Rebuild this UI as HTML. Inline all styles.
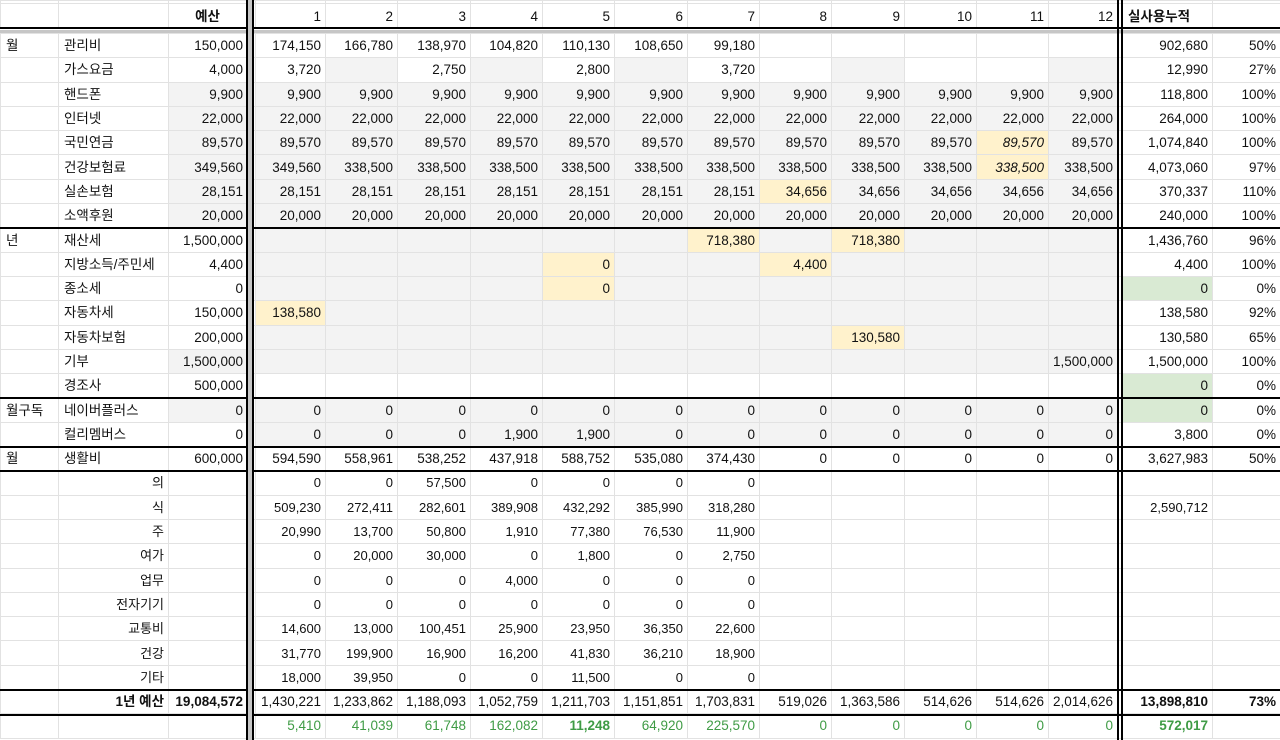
<!DOCTYPE html>
<html><head><meta charset="utf-8">
<style>
html,body{margin:0;padding:0;background:#fff;width:1280px;height:740px;overflow:hidden;position:relative}
table{border-collapse:collapse;table-layout:fixed;position:absolute;left:0;top:0;width:1280px;font-family:"Liberation Sans","Noto Sans CJK KR",sans-serif;font-size:13.5px;color:#111}
td{border:1px solid #e2e2e2;padding:1px 4px 0 3px;text-align:right;white-space:nowrap;overflow:hidden;line-height:14px}
tr.r td{height:22.3px}
td.l{text-align:left;padding-left:5px}
td.c{text-align:center}
.g{background:#f3f3f3}
.y{background:#fff2cc}
.gr{background:#d9ead3}
.i{font-style:italic}
.b{font-weight:bold}
tr.s td{font-size:13px}
tr.t td{color:#3f9b45}
.h{position:absolute;background:#000}
</style></head><body>
<table>
<colgroup><col style="width:58px"><col style="width:110px"><col style="width:79px"><col style="width:8px"><col style="width:70px"><col style="width:72px"><col style="width:73px"><col style="width:72px"><col style="width:72px"><col style="width:73px"><col style="width:72px"><col style="width:72px"><col style="width:73px"><col style="width:72px"><col style="width:72px"><col style="width:69px"><col style="width:5px"><col style="width:90px"><col style="width:68px"></colgroup>
<tr style="height:3px"><td style="height:2px;padding:0"></td><td style="padding:0"></td><td style="padding:0"></td><td style="padding:0"></td><td style="padding:0"></td><td style="padding:0"></td><td style="padding:0"></td><td style="padding:0"></td><td style="padding:0"></td><td style="padding:0"></td><td style="padding:0"></td><td style="padding:0"></td><td style="padding:0"></td><td style="padding:0"></td><td style="padding:0"></td><td style="padding:0"></td><td style="padding:0"></td><td style="padding:0"></td><td style="padding:0"></td></tr>
<tr><td style="height:23px"></td><td></td><td class="c b">예산</td><td></td><td>1</td><td>2</td><td>3</td><td>4</td><td>5</td><td>6</td><td>7</td><td>8</td><td>9</td><td>10</td><td>11</td><td>12</td><td></td><td class="l b">실사용누적</td><td></td></tr>
<tr><td style="height:4px;padding:0;border:0" colspan="19"></td></tr>
<tr class="r"><td class="l">월</td><td class="l">관리비</td><td>150,000</td><td></td><td>174,150</td><td>166,780</td><td>138,970</td><td>104,820</td><td>110,130</td><td>108,650</td><td>99,180</td><td></td><td></td><td></td><td></td><td></td><td></td><td>902,680</td><td>50%</td></tr>
<tr class="r"><td></td><td class="l">가스요금</td><td>4,000</td><td></td><td>3,720</td><td class="g"></td><td>2,750</td><td class="g"></td><td>2,800</td><td class="g"></td><td>3,720</td><td></td><td class="g"></td><td></td><td></td><td class="g"></td><td></td><td>12,990</td><td>27%</td></tr>
<tr class="r"><td></td><td class="l">핸드폰</td><td class="g">9,900</td><td></td><td class="g">9,900</td><td class="g">9,900</td><td class="g">9,900</td><td class="g">9,900</td><td class="g">9,900</td><td class="g">9,900</td><td class="g">9,900</td><td class="g">9,900</td><td class="g">9,900</td><td class="g">9,900</td><td class="g">9,900</td><td class="g">9,900</td><td></td><td>118,800</td><td>100%</td></tr>
<tr class="r"><td></td><td class="l">인터넷</td><td class="g">22,000</td><td></td><td class="g">22,000</td><td class="g">22,000</td><td class="g">22,000</td><td class="g">22,000</td><td class="g">22,000</td><td class="g">22,000</td><td class="g">22,000</td><td class="g">22,000</td><td class="g">22,000</td><td class="g">22,000</td><td class="g">22,000</td><td class="g">22,000</td><td></td><td>264,000</td><td>100%</td></tr>
<tr class="r"><td></td><td class="l">국민연금</td><td class="g">89,570</td><td></td><td class="g">89,570</td><td class="g">89,570</td><td class="g">89,570</td><td class="g">89,570</td><td class="g">89,570</td><td class="g">89,570</td><td class="g">89,570</td><td class="g">89,570</td><td class="g">89,570</td><td class="g">89,570</td><td class="y i">89,570</td><td class="g">89,570</td><td></td><td>1,074,840</td><td>100%</td></tr>
<tr class="r"><td></td><td class="l">건강보험료</td><td class="g">349,560</td><td></td><td class="g">349,560</td><td class="g">338,500</td><td class="g">338,500</td><td class="g">338,500</td><td class="g">338,500</td><td class="g">338,500</td><td class="g">338,500</td><td class="g">338,500</td><td class="g">338,500</td><td class="g">338,500</td><td class="y i">338,500</td><td class="g">338,500</td><td></td><td>4,073,060</td><td>97%</td></tr>
<tr class="r"><td></td><td class="l">실손보험</td><td class="g">28,151</td><td></td><td class="g">28,151</td><td class="g">28,151</td><td class="g">28,151</td><td class="g">28,151</td><td class="g">28,151</td><td class="g">28,151</td><td class="g">28,151</td><td class="y">34,656</td><td class="g">34,656</td><td class="g">34,656</td><td class="g">34,656</td><td class="g">34,656</td><td></td><td>370,337</td><td>110%</td></tr>
<tr class="r"><td></td><td class="l">소액후원</td><td class="g">20,000</td><td></td><td class="g">20,000</td><td class="g">20,000</td><td class="g">20,000</td><td class="g">20,000</td><td class="g">20,000</td><td class="g">20,000</td><td class="g">20,000</td><td class="g">20,000</td><td class="g">20,000</td><td class="g">20,000</td><td class="g">20,000</td><td class="g">20,000</td><td></td><td>240,000</td><td>100%</td></tr>
<tr class="r"><td class="l">년</td><td class="l">재산세</td><td>1,500,000</td><td></td><td class="g"></td><td class="g"></td><td class="g"></td><td class="g"></td><td class="g"></td><td class="g"></td><td class="y">718,380</td><td class="g"></td><td class="y">718,380</td><td class="g"></td><td class="g"></td><td class="g"></td><td></td><td>1,436,760</td><td>96%</td></tr>
<tr class="r"><td></td><td class="l">지방소득/주민세</td><td>4,400</td><td></td><td class="g"></td><td class="g"></td><td class="g"></td><td class="g"></td><td class="y">0</td><td class="g"></td><td class="g"></td><td class="y">4,400</td><td class="g"></td><td class="g"></td><td class="g"></td><td class="g"></td><td></td><td>4,400</td><td>100%</td></tr>
<tr class="r"><td></td><td class="l">종소세</td><td>0</td><td></td><td class="g"></td><td class="g"></td><td class="g"></td><td class="g"></td><td class="y">0</td><td class="g"></td><td class="g"></td><td class="g"></td><td class="g"></td><td class="g"></td><td class="g"></td><td class="g"></td><td></td><td class="gr">0</td><td>0%</td></tr>
<tr class="r"><td></td><td class="l">자동차세</td><td>150,000</td><td></td><td class="y">138,580</td><td class="g"></td><td class="g"></td><td class="g"></td><td class="g"></td><td class="g"></td><td class="g"></td><td class="g"></td><td class="g"></td><td class="g"></td><td class="g"></td><td class="g"></td><td></td><td>138,580</td><td>92%</td></tr>
<tr class="r"><td></td><td class="l">자동차보험</td><td>200,000</td><td></td><td class="g"></td><td class="g"></td><td class="g"></td><td class="g"></td><td class="g"></td><td class="g"></td><td class="g"></td><td class="g"></td><td class="y">130,580</td><td class="g"></td><td class="g"></td><td class="g"></td><td></td><td>130,580</td><td>65%</td></tr>
<tr class="r"><td></td><td class="l">기부</td><td class="g">1,500,000</td><td></td><td class="g"></td><td class="g"></td><td class="g"></td><td class="g"></td><td class="g"></td><td class="g"></td><td class="g"></td><td class="g"></td><td class="g"></td><td class="g"></td><td class="g"></td><td class="g">1,500,000</td><td></td><td>1,500,000</td><td>100%</td></tr>
<tr class="r"><td></td><td class="l">경조사</td><td>500,000</td><td></td><td></td><td></td><td></td><td></td><td></td><td></td><td></td><td></td><td></td><td></td><td></td><td></td><td></td><td class="gr">0</td><td>0%</td></tr>
<tr class="r"><td class="l">월구독</td><td class="l">네이버플러스</td><td class="g">0</td><td></td><td class="g">0</td><td class="g">0</td><td class="g">0</td><td class="g">0</td><td class="g">0</td><td class="g">0</td><td class="g">0</td><td class="g">0</td><td class="g">0</td><td class="g">0</td><td class="g">0</td><td class="g">0</td><td></td><td class="gr">0</td><td>0%</td></tr>
<tr class="r"><td></td><td class="l">컬리멤버스</td><td>0</td><td></td><td class="g">0</td><td class="g">0</td><td class="g">0</td><td class="g">1,900</td><td class="g">1,900</td><td class="g">0</td><td class="g">0</td><td class="g">0</td><td class="g">0</td><td class="g">0</td><td class="g">0</td><td class="g">0</td><td></td><td>3,800</td><td>0%</td></tr>
<tr class="r"><td class="l">월</td><td class="l">생활비</td><td>600,000</td><td></td><td>594,590</td><td>558,961</td><td>538,252</td><td>437,918</td><td>588,752</td><td>535,080</td><td>374,430</td><td>0</td><td>0</td><td>0</td><td>0</td><td>0</td><td></td><td>3,627,983</td><td>50%</td></tr>
<tr class="r s"><td></td><td>의</td><td></td><td></td><td>0</td><td>0</td><td>57,500</td><td>0</td><td>0</td><td>0</td><td>0</td><td></td><td></td><td></td><td></td><td></td><td></td><td></td><td></td></tr>
<tr class="r s"><td></td><td>식</td><td></td><td></td><td>509,230</td><td>272,411</td><td>282,601</td><td>389,908</td><td>432,292</td><td>385,990</td><td>318,280</td><td></td><td></td><td></td><td></td><td></td><td></td><td>2,590,712</td><td></td></tr>
<tr class="r s"><td></td><td>주</td><td></td><td></td><td>20,990</td><td>13,700</td><td>50,800</td><td>1,910</td><td>77,380</td><td>76,530</td><td>11,900</td><td></td><td></td><td></td><td></td><td></td><td></td><td></td><td></td></tr>
<tr class="r s"><td></td><td>여가</td><td></td><td></td><td>0</td><td>20,000</td><td>30,000</td><td>0</td><td>1,800</td><td>0</td><td>2,750</td><td></td><td></td><td></td><td></td><td></td><td></td><td></td><td></td></tr>
<tr class="r s"><td></td><td>업무</td><td></td><td></td><td>0</td><td>0</td><td>0</td><td>4,000</td><td>0</td><td>0</td><td>0</td><td></td><td></td><td></td><td></td><td></td><td></td><td></td><td></td></tr>
<tr class="r s"><td></td><td>전자기기</td><td></td><td></td><td>0</td><td>0</td><td>0</td><td>0</td><td>0</td><td>0</td><td>0</td><td></td><td></td><td></td><td></td><td></td><td></td><td></td><td></td></tr>
<tr class="r s"><td></td><td>교통비</td><td></td><td></td><td>14,600</td><td>13,000</td><td>100,451</td><td>25,900</td><td>23,950</td><td>36,350</td><td>22,600</td><td></td><td></td><td></td><td></td><td></td><td></td><td></td><td></td></tr>
<tr class="r s"><td></td><td>건강</td><td></td><td></td><td>31,770</td><td>199,900</td><td>16,900</td><td>16,200</td><td>41,830</td><td>36,210</td><td>18,900</td><td></td><td></td><td></td><td></td><td></td><td></td><td></td><td></td></tr>
<tr class="r s"><td></td><td>기타</td><td></td><td></td><td>18,000</td><td>39,950</td><td>0</td><td>0</td><td>11,500</td><td>0</td><td>0</td><td></td><td></td><td></td><td></td><td></td><td></td><td></td><td></td></tr>
<tr class="r"><td></td><td class="b">1년 예산</td><td class="b">19,084,572</td><td></td><td>1,430,221</td><td>1,233,862</td><td>1,188,093</td><td>1,052,759</td><td>1,211,703</td><td>1,151,851</td><td>1,703,831</td><td>519,026</td><td>1,363,586</td><td>514,626</td><td>514,626</td><td>2,014,626</td><td></td><td class="b">13,898,810</td><td class="b">73%</td></tr>
<tr class="r t"><td></td><td></td><td></td><td></td><td>5,410</td><td>41,039</td><td>61,748</td><td>162,082</td><td class="b">11,248</td><td>64,920</td><td>225,570</td><td>0</td><td>0</td><td>0</td><td>0</td><td>0</td><td></td><td class="b">572,017</td><td></td></tr>
</table>
<div class="h" style="left:0;top:27px;width:1280px;height:2px"></div>
<div class="h" style="left:0;top:30px;width:1280px;height:3px;background:#c6c6c6"></div>
<div class="h" style="left:0;top:227px;width:1280px;height:2px"></div>
<div class="h" style="left:0;top:397px;width:1280px;height:2px"></div>
<div class="h" style="left:0;top:446px;width:1280px;height:2px"></div>
<div class="h" style="left:0;top:470px;width:1280px;height:2px"></div>
<div class="h" style="left:0;top:689px;width:1280px;height:2px"></div>
<div class="h" style="left:0;top:714px;width:1280px;height:1.5px"></div>
<div class="h" style="left:246px;top:0;width:2px;height:740px"></div>
<div class="h" style="left:248px;top:0;width:4px;height:740px;background:#c6c6c6"></div>
<div class="h" style="left:252px;top:0;width:2px;height:740px"></div>
<div class="h" style="left:1117px;top:0;width:2px;height:740px"></div>
<div class="h" style="left:1121px;top:0;width:1.5px;height:740px"></div>
</body></html>
